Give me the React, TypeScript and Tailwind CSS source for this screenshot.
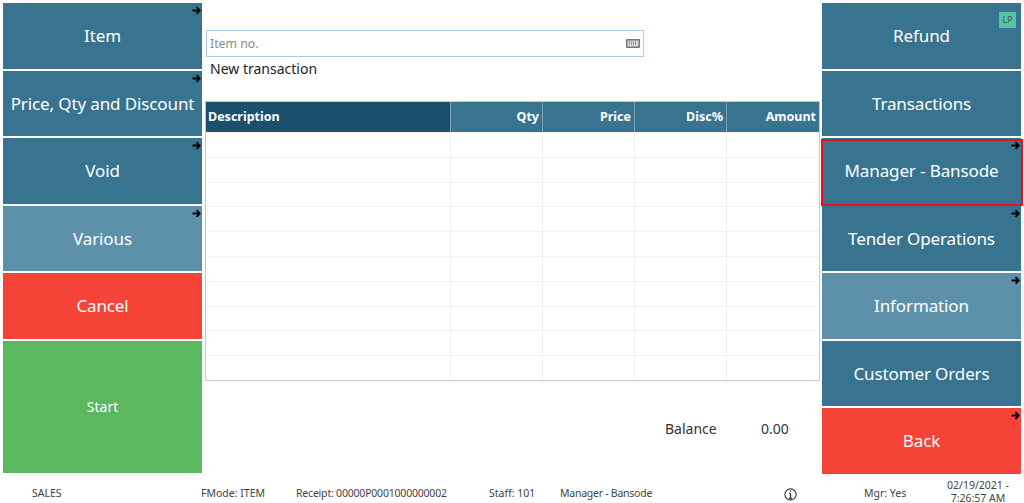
const F = { fontFamily: '"Noto Sans", "DejaVu Sans", sans-serif' };

function Arrow() {
  return (
    <svg className="absolute right-[1px] top-[3px]" width="9" height="9" viewBox="0 0 9 9" fill="none" stroke="#000" strokeWidth="1.8">
      <path d="M0.5 4.5H7.5M4.5 1.2L7.8 4.5L4.5 7.8" />
    </svg>
  );
}

function Btn({ label, color, arrow, grow, selected, small, badge }: { label: string; color: string; arrow?: boolean; grow?: boolean; selected?: boolean; small?: boolean; badge?: boolean }) {
  return (
    <div
      className={`relative flex w-[199px] items-center justify-center text-white ${color} ${grow ? "h-[132px]" : "h-[65.5px]"} ${small ? "text-[14px]" : "text-[17px] tracking-[-0.12px]"}`}
    >
      {label}
      {arrow && <Arrow />}
      {selected && <div className="absolute -bottom-[2px] -left-[1px] -right-[2px] top-[1px] border-2 border-[#e8101a]" />}
      {badge && (
        <div className="absolute right-[5px] top-[9px] flex h-[16px] w-[17px] items-center justify-center bg-[#55c1a5] text-[9px] tracking-normal text-[#2f5f60]">LP</div>
      )}
    </div>
  );
}

const rows = Array.from({ length: 10 });
const cols = ["w-[244px]", "w-[92px]", "w-[92px]", "w-[92px]", "flex-1"];

export default function App() {
  return (
    <div className="flex h-[503px] w-[1024px] flex-col overflow-hidden bg-white text-[#333]" style={F}>
      <div className="flex h-[474px] gap-[3px] pl-[3px] pt-[3px]">
        <div className="flex w-[199px] flex-col gap-[2px]">
          <Btn label="Item" color="bg-[#38748f]" arrow />
          <Btn label="Price, Qty and Discount" color="bg-[#38748f]" arrow />
          <Btn label="Void" color="bg-[#38748f]" arrow />
          <Btn label="Various" color="bg-[#5d91aa]" arrow />
          <Btn label="Cancel" color="bg-[#f64338]" />
          <Btn label="Start" color="bg-[#5cb85f]" grow small />
        </div>

        <div className="flex w-[615px] flex-col">
          <div className="ml-[1px] mt-[27px] flex h-[27px] w-[438px] items-center justify-between border border-[#a6cbee] pl-[3px] pr-[3px]">
            <span className="pt-[2px] text-[12.3px] text-[#8a8a8a]">Item no.</span>
            <svg width="14" height="9" viewBox="0 0 14 9">
              <rect width="14" height="9" rx="1" fill="#777" />
              <rect x="1.5" y="1.5" width="11" height="6" fill="#d8d8d8" />
              <path d="M3 3h8M3 5h8" stroke="#666" strokeWidth="1" strokeDasharray="1 1" />
            </svg>
          </div>
          <div className="ml-[5px] mt-[2px] text-[14px] leading-[20px] text-[#222]">New transaction</div>

          <div className="mt-[22px] border border-[#c8c8c8]">
            <div className="flex h-[30px] text-[12.5px] font-bold text-white">
              <div className={`flex items-center bg-[#1c4f6c] pl-[2px] ${cols[0]}`}>Description</div>
              {["Qty", "Price", "Disc%", "Amount"].map((h, i) => (
                <div key={h} className={`flex items-center justify-end border-l border-[#7ba3b7] bg-[#38748f] pr-[3px] ${cols[i + 1]}`}>{h}</div>
              ))}
            </div>
            {rows.map((_, r) => (
              <div key={r} className="flex h-[24.8px] border-t border-[#f1f1f1]">
                {cols.map((c, i) => (
                  <div key={i} className={`${c} ${i ? "border-l border-[#f1f1f1]" : ""}`} />
                ))}
              </div>
            ))}
          </div>

          <div className="mt-[37px] flex text-[14px] text-[#333]">
            <span className="ml-[460px] w-[96px]">Balance</span>
            <span>0.00</span>
          </div>
        </div>

        <div className="ml-[-1px] flex w-[199px] flex-col gap-[2px]">
          <Btn label="Refund" color="bg-[#38748f]" badge />
          <Btn label="Transactions" color="bg-[#38748f]" />
          <Btn label="Manager - Bansode" color="bg-[#38748f]" arrow selected />
          <Btn label="Tender Operations" color="bg-[#38748f]" arrow />
          <Btn label="Information" color="bg-[#5d91aa]" arrow />
          <Btn label="Customer Orders" color="bg-[#38748f]" />
          <Btn label="Back" color="bg-[#f64338]" arrow />
        </div>
      </div>

      <div className="flex flex-1 items-center pt-[5px] text-[10.5px] text-[#444]">
        <span className="ml-[32px] w-[169px]">SALES</span>
        <span className="w-[95px]">FMode: ITEM</span>
        <span className="w-[193px] tracking-[-0.2px]">Receipt: 00000P0001000000002</span>
        <span className="w-[71px]">Staff: 101</span>
        <span className="w-[224px] tracking-[-0.25px]">Manager - Bansode</span>
        <svg width="13" height="13" viewBox="0 0 12 12" fill="none" stroke="#333">
          <circle cx="6" cy="6" r="5.2" />
          <path d="M6 5v4.5M4.7 9.5h2.6M4.7 5H6M6 2.3v1.2" strokeWidth="1.2" />
        </svg>
        <span className="ml-[67px] w-[54px]">Mgr: Yes</span>
        <span className="mb-[5px] ml-[24px] w-[72px] text-center leading-[13px]">02/19/2021 - 7:26:57 AM</span>
      </div>
    </div>
  );
}
